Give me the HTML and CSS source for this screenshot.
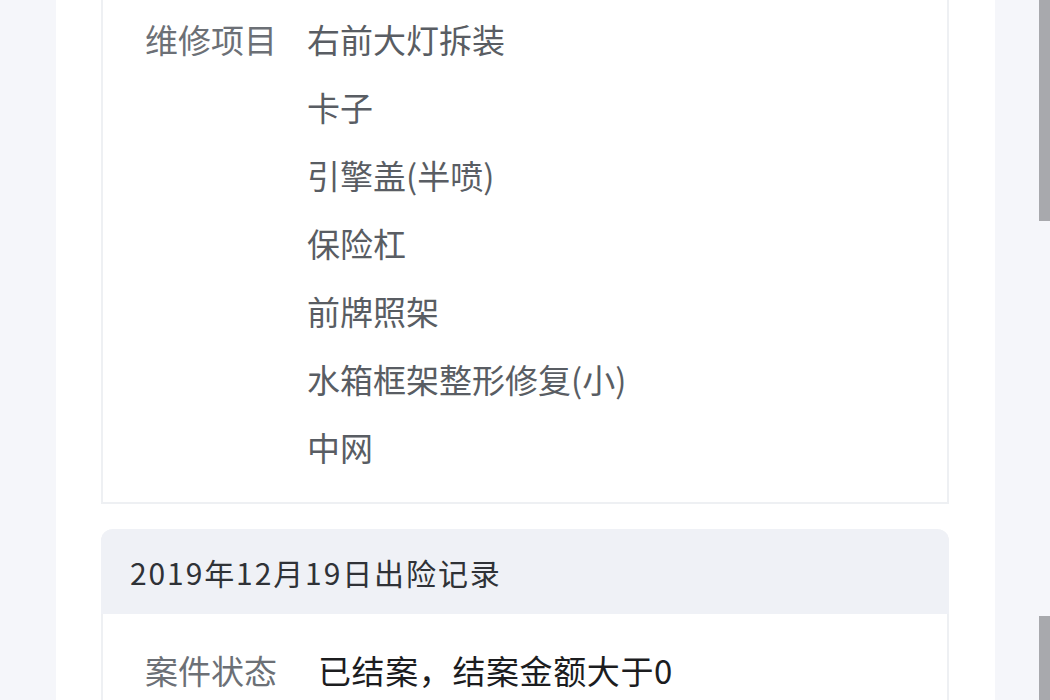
FILE: index.html
```html
<!DOCTYPE html>
<html lang="zh-CN">
<head>
<meta charset="utf-8">
<title>出险记录</title>
<link rel="stylesheet" href="styles.css">
</head>
<body>
<div class="page">
  <div class="gutter-left"></div>
  <main class="panel">
    <section class="card card-scrolled">
      <div class="row">
        <div class="label">维修项目</div>
        <div class="values">
          <div class="value">右前大灯拆装</div>
          <div class="value">卡子</div>
          <div class="value">引擎盖(半喷)</div>
          <div class="value">保险杠</div>
          <div class="value">前牌照架</div>
          <div class="value">水箱框架整形修复(小)</div>
          <div class="value">中网</div>
        </div>
      </div>
    </section>
    <section class="card card-record">
      <header class="card-head">2019年12月19日出险记录</header>
      <div class="card-body">
        <div class="row row-wide">
          <div class="label">案件状态</div>
          <div class="values">
            <div class="value value-strong">已结案，结案金额大于0</div>
          </div>
        </div>
      </div>
    </section>
  </main>
  <div class="gutter-right">
    <div class="thumb thumb-top"></div>
    <div class="thumb-space"></div>
    <div class="thumb thumb-bottom"></div>
  </div>
</div>
</body>
</html>
```

FILE: styles.css
```css
html, body {
  margin: 0;
  padding: 0;
  height: 700px;
  overflow: hidden;
  background: #f5f6fa;
  font-family: "Noto Sans CJK SC", "Noto Sans", sans-serif;
}

.page {
  display: flex;
  height: 700px;
}

.gutter-left {
  width: 56px;
  flex: none;
}

.panel {
  width: 939px;
  flex: none;
  background: #ffffff;
  padding: 0 46px 0 45px;
  box-sizing: border-box;
  display: flex;
  flex-direction: column;
  gap: 25px;
  overflow: hidden;
}

.card {
  border: 2px solid #eef0f3;
  background: #ffffff;
}

.card-scrolled {
  border-top: 0;
  padding: 5px 0 21px 42px;
}

.row {
  display: flex;
  gap: 30px;
  font-size: 33px;
  line-height: 68px;
}

.row-wide {
  gap: 41px;
}

.label {
  color: #6c7076;
  white-space: nowrap;
}

.values {
  display: flex;
  flex-direction: column;
}

.value {
  color: #595d63;
  white-space: nowrap;
}

.value-strong {
  color: #1c1d1f;
  letter-spacing: 0.6px;
}

.card-record {
  border-top: 0;
  border-radius: 12px 12px 0 0;
  flex: 1;
}

.card-head {
  margin: 0 -2px;
  height: 85px;
  flex: none;
  background: #eff1f6;
  border-radius: 12px 12px 0 0;
  padding-left: 29px;
  display: flex;
  align-items: center;
  font-size: 30px;
  letter-spacing: 1.9px;
  color: #2f3237;
}

.card-body {
  padding: 22px 0 0 42px;
}

.gutter-right {
  flex: 1;
  display: flex;
  flex-direction: column;
  align-items: flex-end;
}

.thumb {
  width: 11px;
  background: #a8a9ad;
}

.thumb-top {
  height: 221px;
}

.thumb-space {
  flex: 1;
}

.thumb-bottom {
  height: 84px;
}
```
